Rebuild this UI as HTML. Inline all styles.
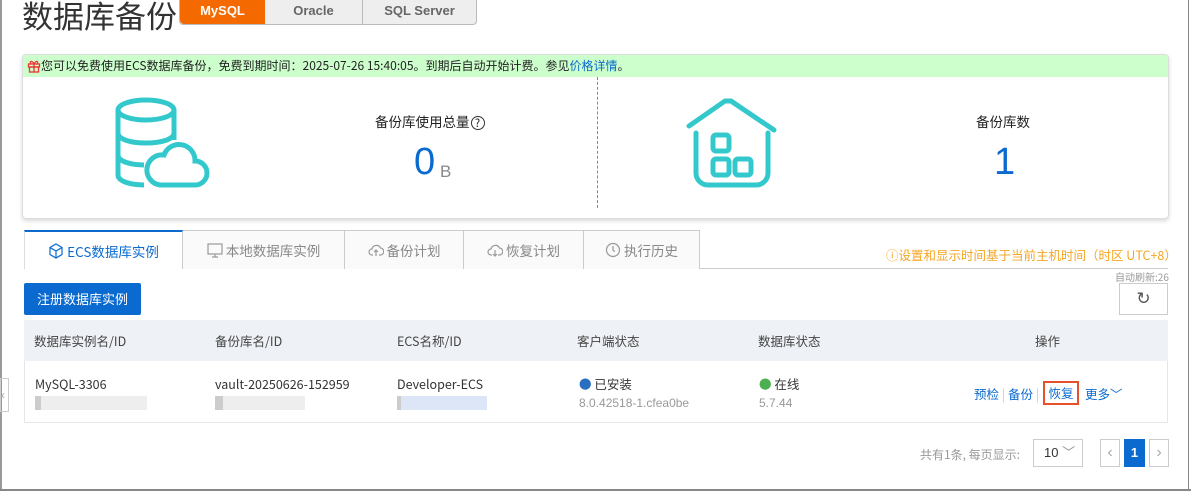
<!DOCTYPE html>
<html><head><meta charset="utf-8"><style>
*{box-sizing:border-box;margin:0;padding:0}
body{width:1191px;height:491px;background:#fff;font-family:"Liberation Sans","Noto Sans CJK SC",sans-serif;position:relative;overflow:hidden;color:#333}
.a{position:absolute}
.cn{font-family:"Noto Sans CJK SC","Liberation Sans",sans-serif}
.tab{height:39px;border-top:1px solid #ccc;border-right:1px solid #ccc;background:#fafafa;white-space:nowrap;display:flex;align-items:center;justify-content:center;gap:3px}
.tab svg{flex:none}
</style></head><body>
<div class="a" style="left:0;top:0;width:2px;height:491px;background:#999"></div>
<div class="a" style="right:2px;top:0;width:1px;height:491px;background:#888"></div>
<div class="a" style="left:0;bottom:0;width:1191px;height:2px;background:#888"></div>
<div class="a cn" style="left:22px;top:-8px;font-size:31px;color:#333">数据库备份</div>
<div class="a" style="left:179px;top:0;width:298px;height:25px;border:1px solid #bbb;border-top:none;border-radius:0 0 4px 4px;background:#eee;display:flex;font-size:13px;font-weight:bold;color:#666">
<div style="width:85px;background:#f56a00;color:#fff;text-align:center;line-height:22px;border-radius:0 0 0 4px">MySQL</div>
<div style="width:98px;text-align:center;line-height:22px;border-right:1px solid #bbb">Oracle</div>
<div style="flex:1;text-align:center;line-height:22px">SQL Server</div></div>
<div class="a" style="left:22px;top:54px;width:1147px;height:165px;border:1px solid #ddd;border-radius:4px;box-shadow:0 2px 4px rgba(0,0,0,.15);background:#fff;overflow:hidden">
<div class="cn" style="height:22px;background:#cfc;font-size:12px;line-height:22px;padding-left:4px;color:#222;display:flex;align-items:center;white-space:nowrap"><svg width="14" height="14" viewBox="0 0 14 14" fill="none" stroke="#e33" stroke-width="1.3"><rect x="1.5" y="5" width="11" height="3"/><rect x="2.5" y="8" width="9" height="5"/><path d="M7 5v8M7 5C5 1 2 2 4 5M7 5c2-4 5-3 3 0"/></svg>您可以免费使用ECS数据库备份，免费到期时间：2025-07-26 15:40:05。到期后自动开始计费。参见<span style="color:#0a6ad0">价格详情</span>。</div>
</div>
<div class="a" style="left:597px;top:77px;height:131px;border-left:1px dashed #888"></div>
<svg class="a" style="left:100px;top:95px" width="110" height="95" viewBox="0 0 110 95" fill="none" stroke="#33c9cc" stroke-width="5">
<ellipse cx="46" cy="15" rx="28" ry="10"/><path d="M18 15v65c0 6 12 10 26 10M74 15v30M18 38c0 6 12 10 28 10s28-4 28-10M18 60c0 6 12 10 26 10"/>
<path d="M60 90h35a12 12 0 0 0 0-24a16 16 0 0 0-31-6a13 13 0 0 0-4 30z"/></svg>
<svg class="a" style="left:685px;top:97px" width="95" height="92" viewBox="0 0 95 92" fill="none" stroke="#33c9cc" stroke-width="5" stroke-linecap="round" stroke-linejoin="round">
<path d="M4 29L40 4h6l43 29"/><path d="M11 36v40a12 12 0 0 0 12 12h48a12 12 0 0 0 12-12v-40"/>
<rect x="28" y="38" width="16" height="16" rx="3"/><rect x="28" y="62" width="16" height="16" rx="3"/><rect x="50" y="62" width="16" height="16" rx="3"/></svg>
<div class="a cn" style="left:375px;top:111px;font-size:13.5px;color:#222">备份库使用总量<span style="border:1px solid #333;border-radius:50%;display:inline-block;width:14px;height:14px;line-height:12px;text-align:center;font-size:11px;margin-left:1px">?</span></div>
<div class="a" style="left:414px;top:141px;font-size:38px;color:#0a6ad0">0</div>
<div class="a" style="left:440px;top:162px;font-size:17px;color:#888">B</div>
<div class="a cn" style="left:976px;top:111px;font-size:13.5px;color:#222">备份库数</div>
<div class="a" style="left:994px;top:141px;font-size:38px;color:#0a6ad0">1</div>
<div class="a" style="left:24px;top:268px;width:1144px;height:1px;background:#ccc"></div>
<div class="a cn" style="left:24px;top:230px;height:39px;display:flex;font-size:13.5px;color:#888">
<div class="tab" style="width:159px;border-top:2px solid #0a6ad0;background:#fff;color:#0a6ad0;border-left:1px solid #ddd"><svg width="16" height="16" viewBox="0 0 16 16" fill="none" stroke="#0a6ad0" stroke-width="1.2"><path d="M8 1l6 3.5v7L8 15 2 11.5v-7zM2 4.5L8 8l6-3.5M8 8v7"/></svg>ECS数据库实例</div>
<div class="tab" style="width:162px"><svg width="16" height="16" viewBox="0 0 16 16" fill="none" stroke="#999" stroke-width="1.2"><rect x="1" y="2" width="14" height="10"/><path d="M8 12v3M5 15h6"/></svg>本地数据库实例</div>
<div class="tab" style="width:119px"><svg width="16" height="16" viewBox="0 0 16 16" fill="none" stroke="#999" stroke-width="1.2"><path d="M5 13H4a3 3 0 0 1 0-6 4.5 4.5 0 0 1 8.5-1A3.5 3.5 0 0 1 12 13h-1M8 14V8M6 10l2-2 2 2"/></svg>备份计划</div>
<div class="tab" style="width:120px"><svg width="16" height="16" viewBox="0 0 16 16" fill="none" stroke="#999" stroke-width="1.2"><path d="M5 13H4a3 3 0 0 1 0-6 4.5 4.5 0 0 1 8.5-1A3.5 3.5 0 0 1 12 13h-1M8 8v6M6 12l2 2 2-2"/></svg>恢复计划</div>
<div class="tab" style="width:116px"><svg width="16" height="16" viewBox="0 0 16 16" fill="none" stroke="#999" stroke-width="1.2"><circle cx="8" cy="8" r="6.5"/><path d="M8 4v4.5l2 1"/></svg>执行历史</div></div>
<div class="a cn" style="left:886px;top:245px;font-size:12.5px;color:#f5a623">ⓘ设置和显示时间基于当前主机时间（时区 UTC+8）</div>
<div class="a cn" style="left:1115px;top:269px;font-size:10px;color:#999">自动刷新:26</div>
<div class="a" style="left:1119px;top:283px;width:49px;height:32px;border:1px solid #ccc;text-align:center;line-height:30px;font-size:17px;color:#555">↻</div>
<div class="a cn" style="left:24px;top:283px;width:117px;height:32px;background:#0a6ad0;border-radius:2px;color:#fff;font-size:13px;line-height:32px;text-align:center">注册数据库实例</div>
<div class="a" style="left:24px;top:320px;width:1144px;height:103px;border:1px solid #e3e6ea"></div>
<div class="a cn" style="left:24px;top:320px;width:1144px;height:41px;background:#eef1f5;font-size:12.5px;color:#444;line-height:41px">
<span class="a" style="left:10px">数据库实例名/ID</span><span class="a" style="left:191px">备份库名/ID</span><span class="a" style="left:373px">ECS名称/ID</span><span class="a" style="left:553px">客户端状态</span><span class="a" style="left:734px">数据库状态</span><span class="a" style="left:1011px">操作</span></div>
<div class="a cn" style="left:35px;top:374px;font-size:12.5px;color:#333">MySQL-3306</div>
<div class="a" style="left:35px;top:396px;width:112px;height:14px;background:linear-gradient(90deg,#ccc 0 6px,#eee 6px)"></div>
<div class="a cn" style="left:215px;top:374px;font-size:12.5px;color:#333">vault-20250626-152959</div>
<div class="a" style="left:215px;top:396px;width:90px;height:14px;background:linear-gradient(90deg,#ccc 0 8px,#eee 8px)"></div>
<div class="a cn" style="left:397px;top:374px;font-size:12.5px;color:#333">Developer-ECS</div>
<div class="a" style="left:397px;top:396px;width:90px;height:14px;background:linear-gradient(90deg,#ccc 0 4px,#dde6f7 4px)"></div>
<div class="a cn" style="left:579px;top:374px;font-size:12.5px;color:#333"><span style="color:#2a6fbf">●</span> 已安装</div>
<div class="a" style="left:579px;top:396px;font-size:12px;color:#999">8.0.42518-1.cfea0be</div>
<div class="a cn" style="left:759px;top:374px;font-size:12.5px;color:#333"><span style="color:#4caf50">●</span> 在线</div>
<div class="a" style="left:759px;top:396px;font-size:12px;color:#999">5.7.44</div>
<div class="a cn" style="left:974px;top:384px;font-size:12.5px;color:#0a6ad0">预检 <span style="color:#ccc">|</span> 备份 <span style="color:#ccc">|</span></div>
<div class="a cn" style="left:1043px;top:381px;width:36px;height:24px;border:2px solid #e8502a;font-size:12.5px;color:#0a6ad0;text-align:center;line-height:20px">恢复</div>
<div class="a cn" style="left:1085px;top:384px;font-size:12.5px;color:#0a6ad0">更多﹀</div>
<div class="a cn" style="left:920px;top:446px;font-size:12px;color:#999">共有1条, 每页显示:</div>
<div class="a" style="left:1033px;top:439px;width:50px;height:28px;border:1px solid #ccc;font-size:13px;line-height:26px;padding-left:10px">10 <span style="color:#999">﹀</span></div>
<div class="a" style="left:1100px;top:439px;width:20px;height:28px;border:1px solid #ccc;color:#aaa;text-align:center;line-height:26px">‹</div>
<div class="a" style="left:1124px;top:439px;width:21px;height:28px;background:#0a6ad0;color:#fff;text-align:center;line-height:28px;font-size:13px;font-weight:bold">1</div>
<div class="a" style="left:1149px;top:439px;width:20px;height:28px;border:1px solid #ccc;color:#aaa;text-align:center;line-height:26px">›</div>
<div class="a" style="left:0;top:378px;width:9px;height:34px;border:1px solid #ccc;color:#aaa;font-size:12px;line-height:32px">‹</div>
</body></html>
